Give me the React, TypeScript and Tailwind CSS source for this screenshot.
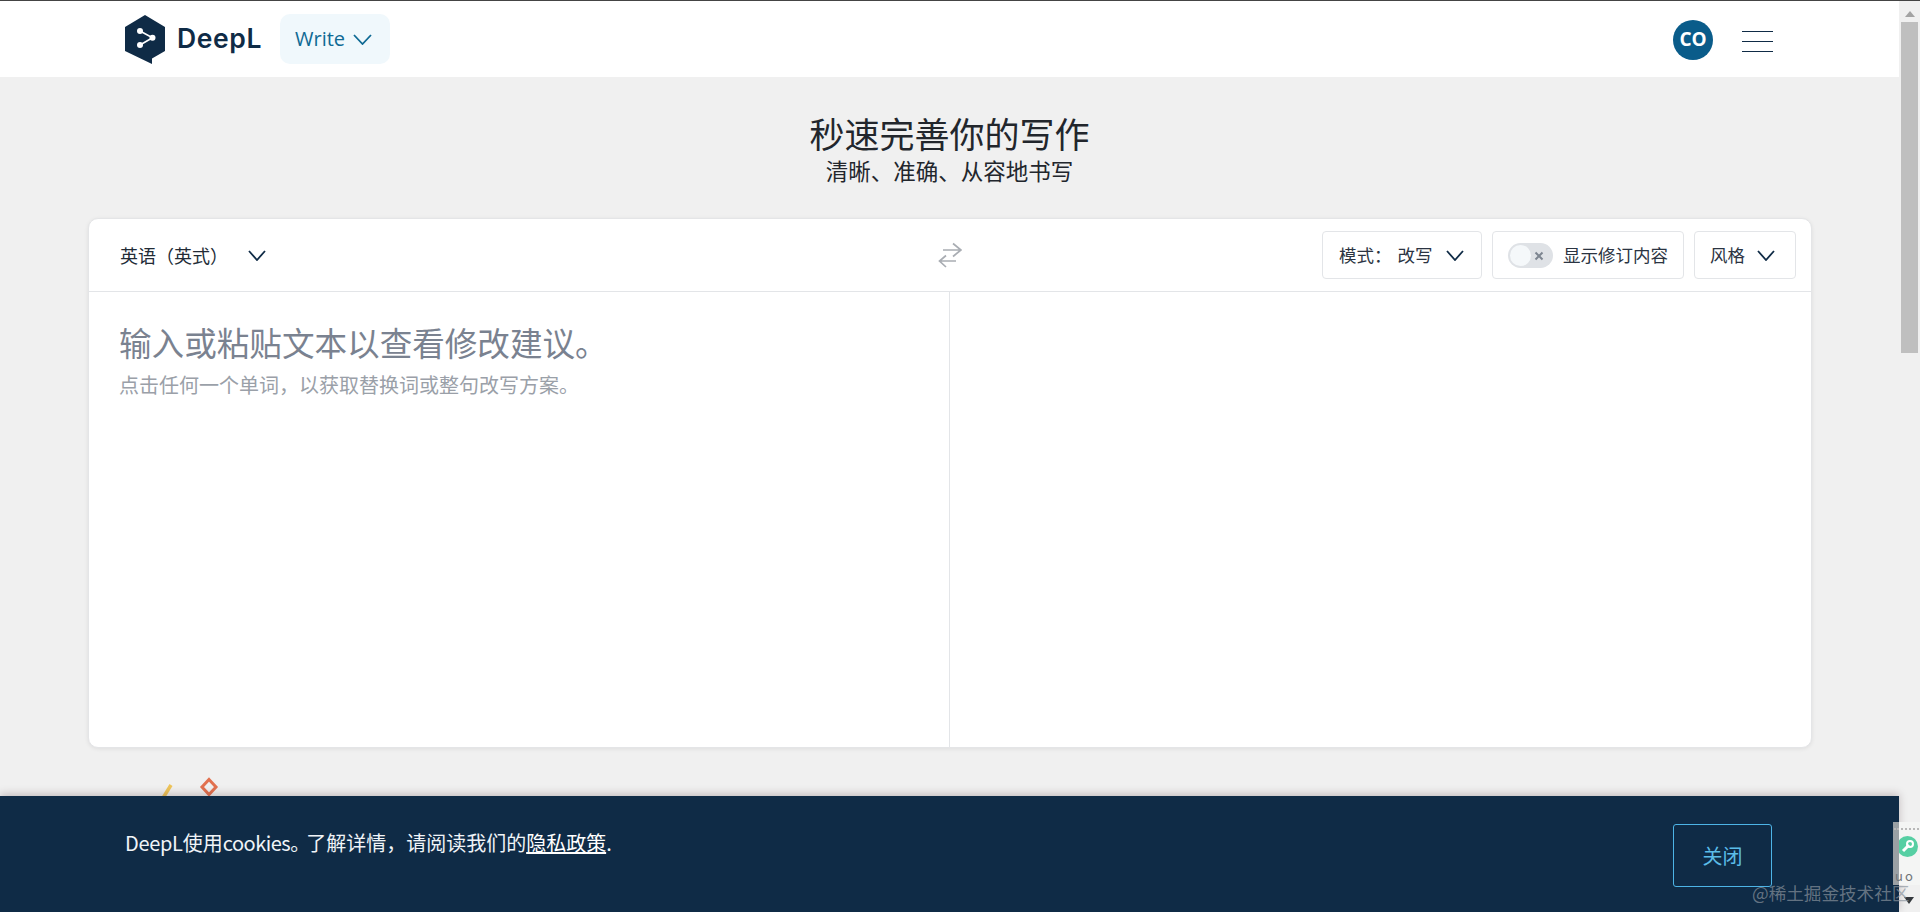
const cjk = { fontFamily: '"Noto Sans CJK SC", "Liberation Sans", sans-serif' };

function Chevron({ className, color = "#0f2b46", w = 18, h = 10 }: { className?: string; color?: string; w?: number; h?: number }) {
  return (
    <svg width={w} height={h} viewBox={`0 0 ${w} ${h}`} fill="none" className={className}>
      <polyline points={`1,1 ${w / 2},${h - 1} ${w - 1},1`} stroke={color} strokeWidth="1.8" />
    </svg>
  );
}

function Logo() {
  return (
    <svg width="40" height="49" viewBox="0 0 40 49">
      <path d="M20 0 L40 12 L40 36 L27 43.5 L27 49 L0 36 L0 12 Z" fill="#0f2b46" />
      <path d="M15 16 L27.5 22.7 L15 30" stroke="#fff" strokeWidth="1.6" fill="none" />
      <circle cx="15" cy="16" r="3" fill="#fff" />
      <circle cx="15" cy="30" r="3" fill="#fff" />
      <circle cx="27.5" cy="22.7" r="3" fill="#fff" />
    </svg>
  );
}

function Header() {
  return (
    <header className="h-[77px] bg-white border-t border-[#444444] flex items-center pl-[125px] pr-[126px]">
      <Logo />
      <span className="ml-[12px] text-[26.5px] font-semibold text-[#0f2b46] tracking-[0.6px]" style={{ fontFamily: "Inter, sans-serif" }}>DeepL</span>
      <div className="ml-[18px] w-[110px] h-[50px] rounded-[10px] bg-[#f0f8fc] flex items-center pl-[15px] gap-[8px]">
        <span className="text-[20px] text-[#0f6a94] font-medium" style={{ fontFamily: '"Open Sans", sans-serif' }}>Write</span>
        <Chevron color="#0f6a94" w={19} h={11} />
      </div>
      <div className="ml-auto mt-[1px] w-[40px] h-[40px] rounded-full bg-[#0a5c8a] text-white font-bold text-[19px] flex items-center justify-center" style={{ fontFamily: '"Open Sans", sans-serif' }}>CO</div>
      <div className="ml-[29px] mt-[4px] w-[31px] flex flex-col gap-[9px]">
        <div className="h-px bg-[#0f2b46]" />
        <div className="h-px bg-[#0f2b46]" />
        <div className="h-px bg-[#0f2b46]" />
      </div>
    </header>
  );
}

function ToolButton({ children, className }: { children: React.ReactNode; className: string }) {
  return (
    <div className={`h-[48px] border border-[#e3e5e8] rounded-[4px] flex items-center text-[17.5px] text-[#2b3442] ${className}`}>
      {children}
    </div>
  );
}

function Toolbar() {
  return (
    <div className="h-[73px] border-b border-[#e3e5e8] flex items-center relative">
      <div className="flex-1 flex items-center pl-[31px] text-[18px] text-[#222b36]">
        <span>英语（英式）</span>
        <Chevron className="ml-[20px]" w={18} h={11} />
      </div>
      <svg width="24" height="26" viewBox="0 0 24 26" fill="none" className="absolute left-[849px] top-[23px]" stroke="#a9adb3" strokeWidth="1.7">
        <path d="M5 8 H23 M15 1.5 L23 8 L15 14.5" />
        <path d="M18 19 H1.5 M8 13.5 L1.5 19 L8 25" />
      </svg>
      <div className="flex items-center gap-[10px] pr-[15px]">
        <ToolButton className="w-[160px] pl-[16px]">
          <span>模式：</span>
          <span className="ml-[6px]">改写</span>
          <Chevron className="ml-[13px]" w={18} h={11} />
        </ToolButton>
        <ToolButton className="w-[192px] pl-[15px]">
          <div className="w-[45px] h-[25px] rounded-full bg-[#dfe2e6] flex items-center pl-[2px] relative">
            <div className="w-[21px] h-[21px] rounded-full bg-[#f5f8fa]" />
            <svg width="10" height="10" viewBox="0 0 10 10" className="absolute right-[9px] top-[8px]" stroke="#7d8590" strokeWidth="2">
              <path d="M1.5 1.5 L8.5 8.5 M8.5 1.5 L1.5 8.5" />
            </svg>
          </div>
          <span className="ml-[10px]">显示修订内容</span>
        </ToolButton>
        <ToolButton className="w-[102px] pl-[15px]">
          <span>风格</span>
          <Chevron className="ml-[12px]" w={18} h={11} />
        </ToolButton>
      </div>
    </div>
  );
}

function Editor() {
  return (
    <div className="w-[1724px] h-[530px] ml-[88px] bg-white rounded-[10px] border border-[#e4e5e7] shadow-[0_1px_4px_rgba(0,0,0,0.08)] flex flex-col">
      <Toolbar />
      <div className="flex-1 flex">
        <div className="w-[861px] border-r border-[#e3e5e8] pl-[30px] pt-[28px]">
          <div className="text-[32.6px] leading-[44px] text-[#7a8290]">输入或粘贴文本以查看修改建议。</div>
          <div className="mt-[7px] text-[20px] leading-[28px] text-[#9aa0a8]">点击任何一个单词，以获取替换词或整句改写方案。</div>
        </div>
        <div className="flex-1" />
      </div>
    </div>
  );
}

function Banner() {
  return (
    <div className="absolute left-0 right-0 bottom-0 h-[116px] bg-[#0f2b46] shadow-[0_-2px_8px_rgba(60,30,40,0.25)] flex pl-[125px] pr-[127px] pt-[24px]">
      <div className="text-[20px] leading-[46px] text-[#f0f4f8]">
        <span className="tracking-[-0.3px]">DeepL</span>使用<span className="tracking-[-0.5px]">cookies</span><span className="-mr-[4px]">。</span>了解详情，请阅读我们的<span className="underline text-white">隐私政策</span>.
      </div>
      <div className="ml-auto mt-[4px] w-[99px] h-[63px] rounded-[3px] border border-[#4db4e6] text-[#5bbce8] text-[20px] flex items-center justify-center">关闭</div>
    </div>
  );
}

function Decor() {
  return (
    <svg width="70" height="30" viewBox="0 0 70 30" className="absolute left-[155px] top-[774px]" fill="none">
      <path d="M8 24 L16 11" stroke="#eec45a" strokeWidth="3.5" />
      <path d="M54 5.5 L61 13 L54 20.5 L47 13 Z" stroke="#e2714f" strokeWidth="3" />
    </svg>
  );
}

function Scrollbar() {
  return (
    <div className="w-[21px] bg-[#f0f0f0] flex flex-col items-center border-t border-[#444444]">
      <svg width="12" height="20" viewBox="0 0 12 20" className="mt-[1px]">
        <path d="M1 15 L6 9 L11 15 Z" fill="#a3a3a3" />
      </svg>
      <div className="w-[17px] h-[331px] bg-[#bfbfbf]" />
    </div>
  );
}

function Widget() {
  return (
    <div className="absolute right-0 top-[822px] w-[27px] h-[63px] bg-[#f4f5f4] flex flex-col items-center pt-[14px]">
      <div className="absolute left-0 top-0 bottom-0 w-[6px] bg-[#9aa0a4]" />
      <div className="absolute left-[1px] right-[1px] top-[6px] border-t-2 border-dotted border-[#b8b8b8]" />
      <svg width="21" height="21" viewBox="0 0 21 21" className="ml-[1px]">
        <circle cx="10.5" cy="10.5" r="10.5" fill="#56cfa3" />
        <path d="M6 15 L12 9" stroke="#fff" strokeWidth="3" />
        <circle cx="13" cy="8" r="3" stroke="#fff" strokeWidth="2" fill="none" />
      </svg>
      <span className="absolute bottom-[5px] left-[2px] text-[13px] leading-[8px] tracking-[2px] text-[#6f7478]">uo</span>
    </div>
  );
}

export default function App() {
  return (
    <div className="relative w-[1920px] h-[912px] overflow-hidden flex bg-[#f0f0f0]" style={cjk}>
      <main className="relative w-[1899px] h-full">
        <Header />
        <div className="pt-[36px] h-[141px] flex flex-col items-center text-[#22262c]">
          <h1 className="text-[35px] leading-[40px] font-normal">秒速完善你的写作</h1>
          <p className="text-[22.5px] leading-[30px] mt-[2px]">清晰、准确、从容地书写</p>
        </div>
        <Editor />
        <Decor />
        <Banner />
      </main>
      <Scrollbar />
      <Widget />
      <svg width="10" height="7" viewBox="0 0 10 7" className="absolute left-[1904px] top-[897px]">
        <path d="M0 0 H10 L5 7 Z" fill="#33383d" />
      </svg>
      <div className="absolute left-[1752px] top-[884px] text-[17.6px] leading-[18px] text-[#8a939d]/70">@稀土掘金技术社区</div>
    </div>
  );
}
